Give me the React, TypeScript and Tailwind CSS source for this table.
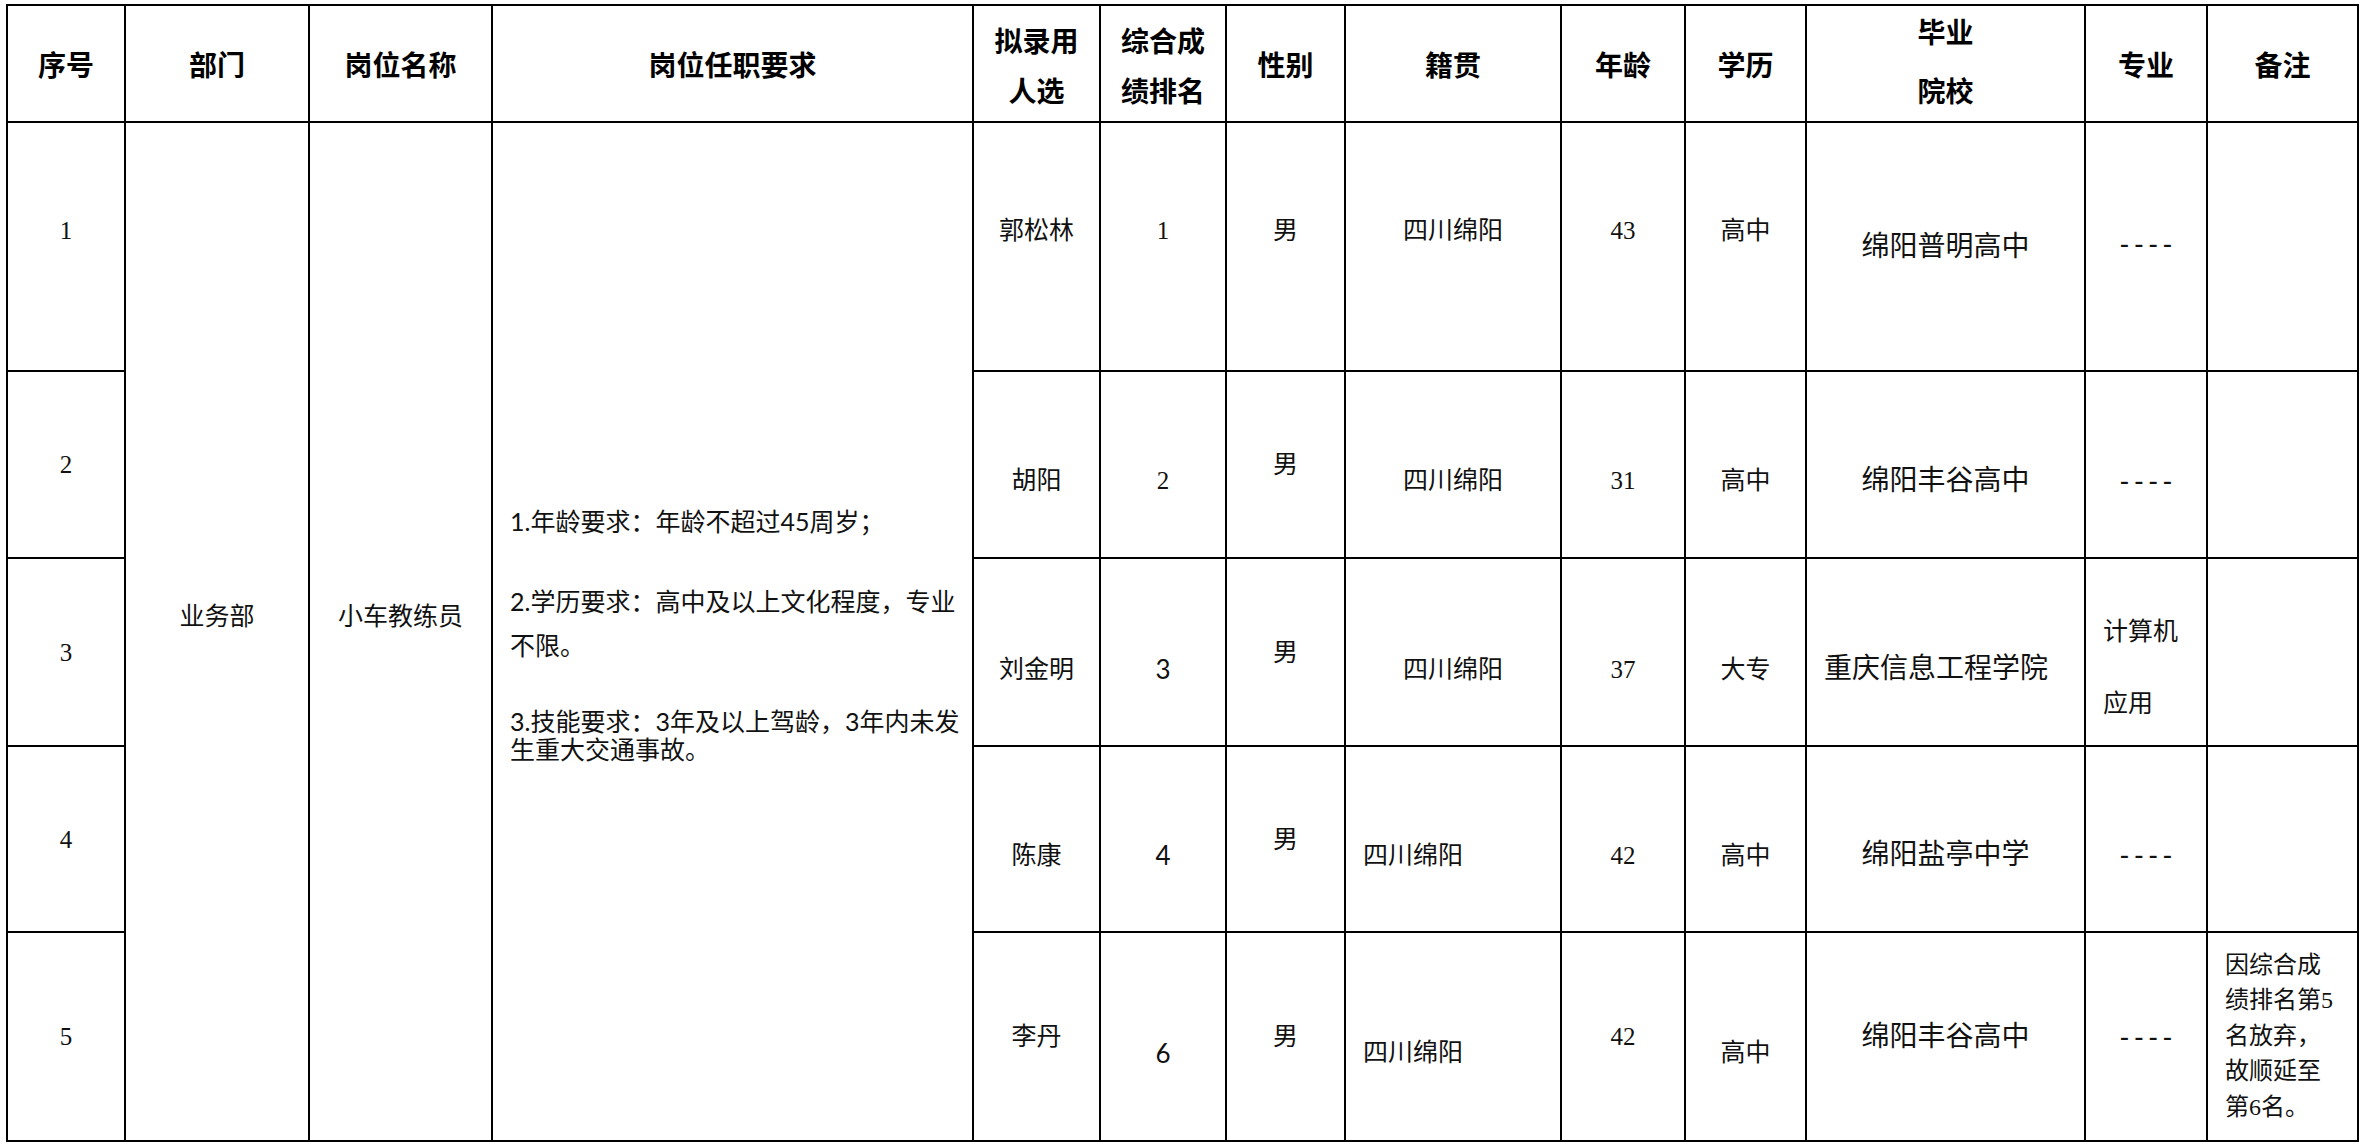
import React from "react";

const serif = "[font-family:'Liberation_Serif','Noto_Sans_CJK_SC',serif]";
const sans = "[font-family:Lato,'Noto_Sans_CJK_SC',sans-serif]";
const cjk = "[font-family:'Noto_Sans_CJK_SC',sans-serif]";

// vertical nudge of a cell's text, in px from the middle of the row
const OFF: Record<string, string> = {
  up: "pb-[32px]",
  up3: "pb-[6px]",
  mid: "",
  down: "pt-[32px]",
  down2: "pt-[34px]",
};

type Cell = {
  t: React.ReactNode;
  o?: keyof typeof OFF;
  left?: boolean;
  big?: boolean;
  latin?: boolean;
};

type Row = { seq: string; seqOff: keyof typeof OFF; cells: Cell[] };

const Dash = () => (
  <span className="whitespace-nowrap [font-family:'Liberation_Sans',sans-serif] text-[28px] tracking-[5px] mr-[-5px]">----</span>
);

const rows: Row[] = [
  {
    seq: "1",
    seqOff: "up",
    cells: [
      { t: "郭松林", o: "up" },
      { t: "1", o: "up" },
      { t: "男", o: "up" },
      { t: "四川绵阳", o: "up" },
      { t: "43", o: "up" },
      { t: "高中", o: "up" },
      { t: "绵阳普明高中", o: "mid", big: true },
      { t: <Dash />, o: "up3" },
      { t: "" },
    ],
  },
  {
    seq: "2",
    seqOff: "mid",
    cells: [
      { t: "胡阳", o: "down" },
      { t: "2", o: "down" },
      { t: "男", o: "mid" },
      { t: "四川绵阳", o: "down" },
      { t: "31", o: "down" },
      { t: "高中", o: "down" },
      { t: "绵阳丰谷高中", o: "down", big: true },
      { t: <Dash />, o: "down" },
      { t: "" },
    ],
  },
  {
    seq: "3",
    seqOff: "mid",
    cells: [
      { t: "刘金明", o: "down2" },
      { t: "3", o: "down2", latin: true },
      { t: "男", o: "mid" },
      { t: "四川绵阳", o: "down2" },
      { t: "37", o: "down2" },
      { t: "大专", o: "down2" },
      { t: "重庆信息工程学院", o: "down2", big: true, left: true },
      {
        t: (
          <div className="flex flex-col leading-[36px]">
            <span>计算机</span>
            <span className="mt-[36px]">应用</span>
          </div>
        ),
        o: "down",
        left: true,
      },
      { t: "" },
    ],
  },
  {
    seq: "4",
    seqOff: "mid",
    cells: [
      { t: "陈康", o: "down" },
      { t: "4", o: "down", latin: true },
      { t: "男", o: "mid" },
      { t: "四川绵阳", o: "down", left: true },
      { t: "42", o: "down" },
      { t: "高中", o: "down" },
      { t: "绵阳盐亭中学", o: "down", big: true },
      { t: <Dash />, o: "down" },
      { t: "" },
    ],
  },
  {
    seq: "5",
    seqOff: "mid",
    cells: [
      { t: "李丹", o: "mid" },
      { t: "6", o: "down", latin: true },
      { t: "男", o: "mid" },
      { t: "四川绵阳", o: "down", left: true },
      { t: "42", o: "mid" },
      { t: "高中", o: "down" },
      { t: "绵阳丰谷高中", o: "mid", big: true },
      { t: <Dash />, o: "mid" },
      {
        t: (
          <div className="flex flex-col leading-[35.5px] text-[24px]">
            <span>因综合成</span>
            <span>绩排名第5</span>
            <span>名放弃，</span>
            <span>故顺延至</span>
            <span>第6名。</span>
          </div>
        ),
        o: "mid",
        left: true,
      },
    ],
  },
];

function Head({ children }: { children: React.ReactNode }) {
  return (
    <div className={`bg-white flex items-center justify-center text-[28px] font-bold leading-none text-black ${cjk}`}>
      {children}
    </div>
  );
}

function DataCell({ c }: { c: Cell }) {
  const align = c.left ? "justify-start pl-[17px]" : "justify-center";
  const size = c.latin ? `text-[26px] ${sans}` : c.big ? "text-[28px]" : "text-[25px]";
  return (
    <div className={`bg-white flex items-center leading-none text-[#111] ${serif} ${align} ${OFF[c.o ?? "mid"]}`}>
      <div className={size}>{c.t}</div>
    </div>
  );
}

export default function App() {
  return (
    <div className="w-[2367px] h-[1147px] bg-white pt-[4px] pl-[6px]">
      <div className="grid w-fit bg-black p-[2px] gap-[2px] grid-cols-[116px_182px_181px_479px_125px_124px_117px_214px_122px_119px_277px_120px_149px] grid-rows-[115px_247px_185px_186px_184px_207px]">
        <Head>序号</Head>
        <Head>部门</Head>
        <Head>岗位名称</Head>
        <Head>岗位任职要求</Head>
        <div className={`bg-white flex flex-col items-center pt-[20px] text-[28px] font-bold leading-[28px] text-black ${cjk}`}>
          <span>拟录用</span>
          <span className="mt-[22px]">人选</span>
        </div>
        <div className={`bg-white flex flex-col items-center pt-[20px] text-[28px] font-bold leading-[28px] text-black ${cjk}`}>
          <span>综合成</span>
          <span className="mt-[22px]">绩排名</span>
        </div>
        <Head>性别</Head>
        <Head>籍贯</Head>
        <Head>年龄</Head>
        <Head>学历</Head>
        <div className={`bg-white flex flex-col items-center pt-[11px] text-[28px] font-bold leading-[28px] text-black ${cjk}`}>
          <span>毕业</span>
          <span className="mt-[31px]">院校</span>
        </div>
        <Head>专业</Head>
        <Head>备注</Head>

        {rows.map((r, i) => (
          <React.Fragment key={r.seq}>
            <div className={`bg-white flex items-center justify-center text-[25px] leading-none text-[#111] ${serif} ${OFF[r.seqOff]}`}>
              {r.seq}
            </div>
            {i === 0 && (
              <>
                <div className={`row-span-5 bg-white flex items-center justify-center pb-[30px] text-[25px] leading-none text-[#111] ${serif}`}>
                  业务部
                </div>
                <div className={`row-span-5 bg-white flex items-center justify-center pb-[30px] text-[25px] leading-none text-[#111] ${serif}`}>
                  小车教练员
                </div>
                <div className={`row-span-5 bg-white flex flex-col justify-center pl-[17px] pt-[6px] text-[25px] text-[#111] whitespace-nowrap ${cjk}`}>
                  <div className="leading-[26px]">
                    <span className={sans}>1.</span>年龄要求：年龄不超过<span className={sans}>45</span>周岁；
                  </div>
                  <div className="leading-[26px] mt-[53px]">
                    <span className={sans}>2.</span>学历要求：高中及以上文化程度，专业
                  </div>
                  <div className="leading-[26px] mt-[17px]">不限。</div>
                  <div className="leading-[26px] mt-[50px]">
                    <span className={sans}>3.</span>技能要求：<span className={sans}>3</span>年及以上驾龄，<span className={sans}>3</span>年内未发
                  </div>
                  <div className="leading-[28px]">生重大交通事故。</div>
                </div>
              </>
            )}
            {r.cells.map((c, j) => (
              <DataCell key={j} c={c} />
            ))}
          </React.Fragment>
        ))}
      </div>
    </div>
  );
}
